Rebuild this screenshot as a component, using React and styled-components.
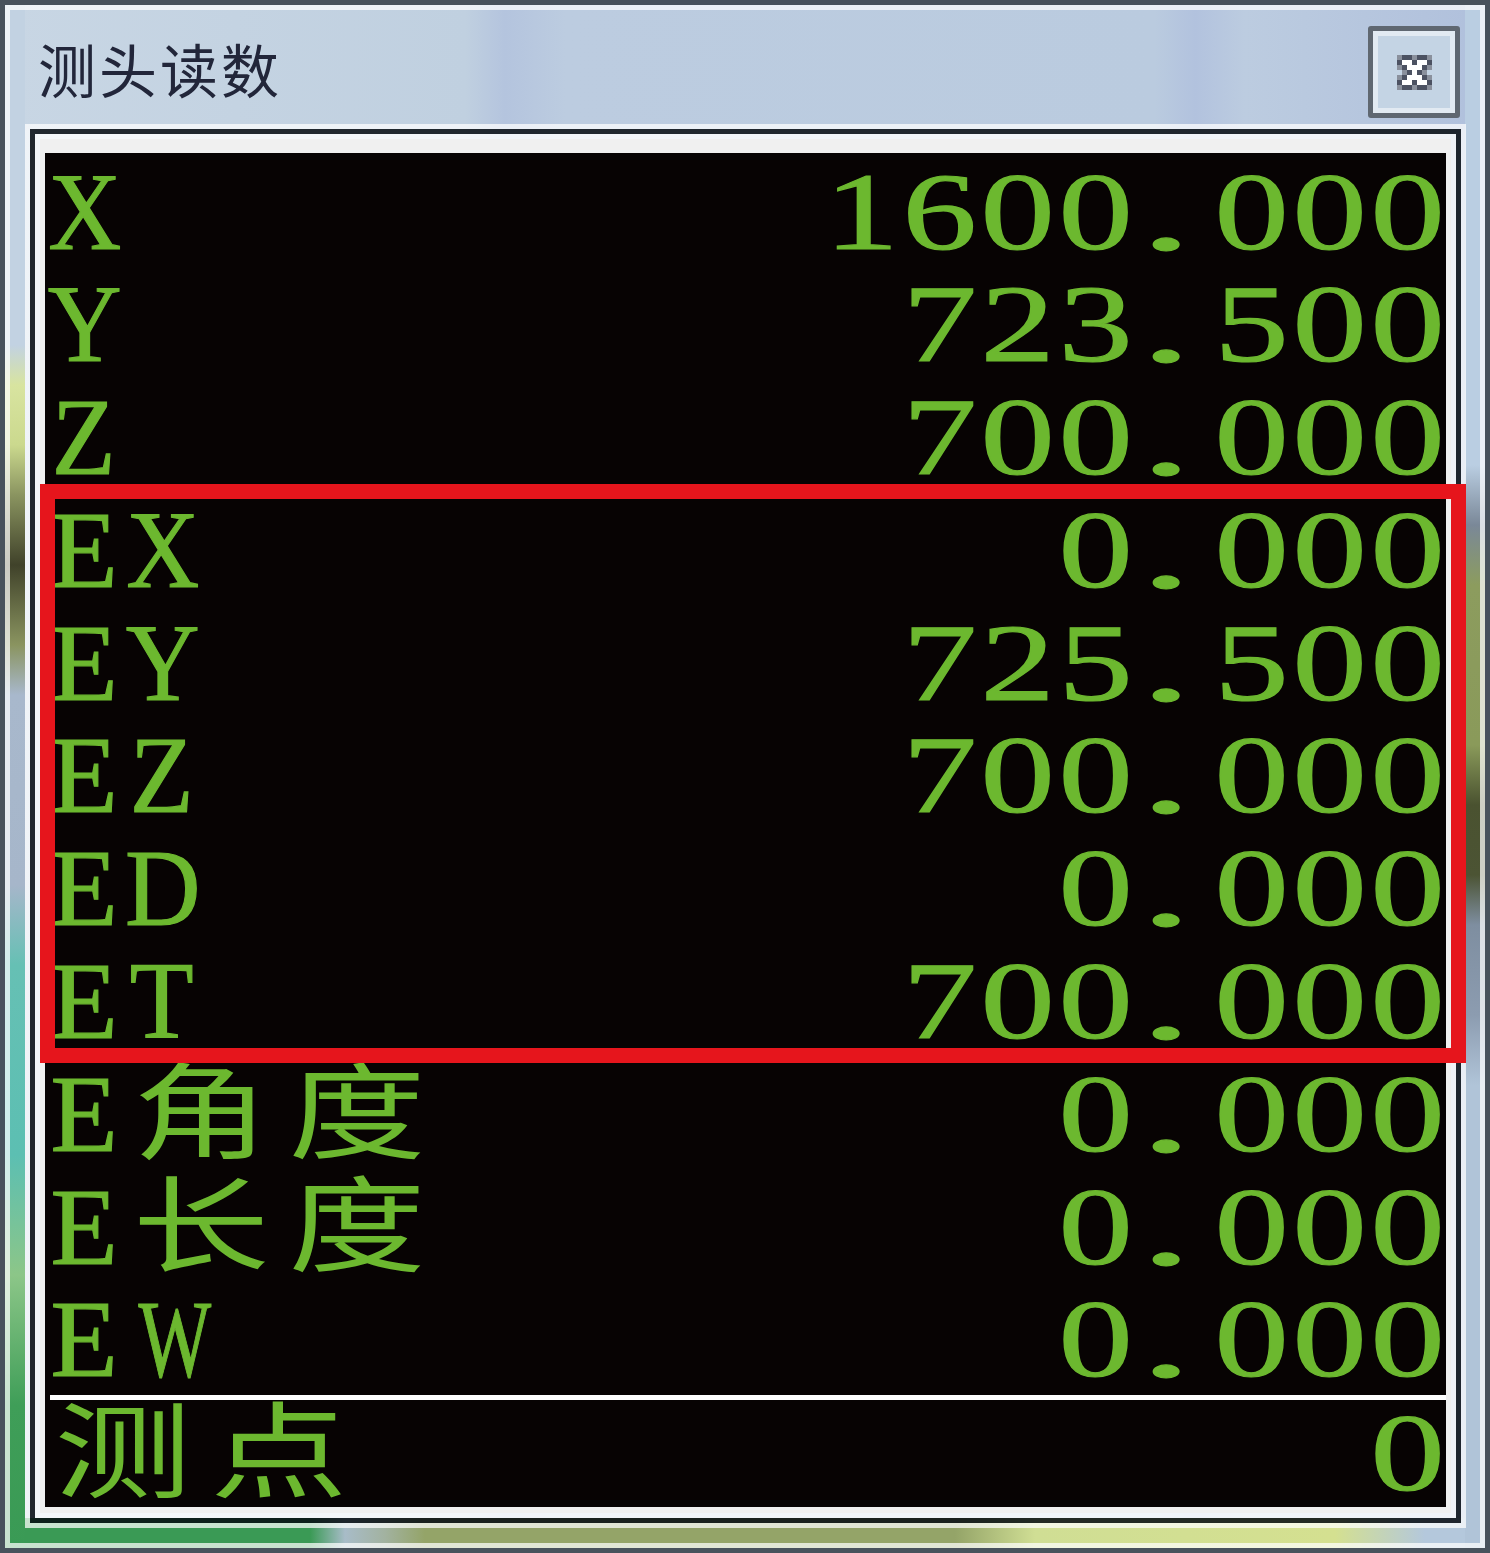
import React from "react";
import styled, { createGlobalStyle } from "styled-components";

const Global = createGlobalStyle`
  html, body { margin: 0; padding: 0; background: #ffffff; }
  body { font-family: "Liberation Serif", serif; }
`;

const Window = styled.div`
  width: 1490px;
  height: 1553px;
  box-sizing: border-box;
  border: 5px solid #48525c;
  display: flex;
`;

const Frame = styled.div`
  flex: 1;
  box-sizing: border-box;
  border: 5px solid rgba(255, 255, 255, 0.72);
  padding: 0 14px 15px 15px;
  display: flex;
  flex-direction: column;
  background-origin: border-box;
  background-repeat: no-repeat;
  background-image:
    linear-gradient(to bottom,
      #c2d2e2 0px, #c2d2e2 340px, #d8e4a0 380px, #cbd98e 440px,
      #8a9460 490px, #40422a 560px, #8a9460 640px, #a8b8cc 690px,
      #a6b6ca 880px, #66c0b4 960px, #5cbfb2 1150px, #8cc688 1270px,
      #3f9e58 1400px, #3a9a55 100%),
    linear-gradient(to bottom,
      #bacee2 0px, #bacee2 460px, #7a8898 520px, #8c9c5e 580px,
      #8a9a5a 740px, #4a5230 800px, #4c5434 870px, #7e8ea0 920px,
      #8c9cb0 1010px, #b0c4d8 1080px, #b0c4d8 100%),
    linear-gradient(to right,
      #3a9a55 0px, #3a9a55 305px, #a8bcc8 340px, #a2b2a0 380px,
      #94a468 420px, #94a468 950px, #d0de94 1030px, #d4e090 1330px,
      #b4c8dc 1420px, #b4c8dc 100%),
    linear-gradient(to right,
      #c8d6e4 0px, #c0d0e0 460px, #b4c4de 500px, #bccce0 560px,
      #bacbdf 1150px, #b2c2de 1190px, #bccce0 1240px, #b0c0dc 100%);
  background-size: 20px 100%, 20px 100%, 100% 30px, 100% 100%;
  background-position: left top, right top, left bottom, left top;
`;

const TitleBar = styled.div`
  height: 114px;
  flex: none;
  box-sizing: border-box;
  display: flex;
  align-items: center;
  justify-content: space-between;
  padding: 0 6px 0 13px;
`;

const Title = styled.div`
  font-family: "Noto Sans CJK SC", sans-serif;
  font-size: 58px;
  line-height: 58px;
  letter-spacing: 3px;
  color: #22263a;
  margin-top: 2px;
`;

const CloseButton = styled.div`
  align-self: flex-start;
  margin-top: 16px;
  width: 92px;
  height: 92px;
  box-sizing: border-box;
  border: 5px solid #5f6771;
  border-radius: 3px;
  background: #c4d4e4;
  box-shadow: inset 0 0 0 5px #e2eaf2;
  display: flex;
  align-items: center;
  justify-content: center;
`;

const Client = styled.div`
  flex: 1;
  display: flex;
  border: 5px solid rgba(255, 255, 255, 0.72);
`;

const ClientEdge = styled.div`
  flex: 1;
  display: flex;
  border: 5px solid rgba(6, 12, 18, 0.86);
`;

const ClientBevel = styled.div`
  flex: 1;
  display: flex;
  border: 5px solid rgba(255, 255, 255, 0.8);
`;

const Face = styled.div`
  flex: 1;
  display: flex;
  background: #f0f0f0;
  padding: 14px 5px 6px 5px;
`;

const Panel = styled.div`
  flex: 1;
  position: relative;
  background: #070303;
  display: flex;
  flex-direction: column;
`;

const Row = styled.div`
  display: flex;
  justify-content: space-between;
  box-sizing: border-box;
  height: ${(p) => (p.$last ? "107px" : "112.8px")};
  padding-top: ${(p) => (p.$last ? "0px" : "5.5px")};
  font-family: "Liberation Serif", serif;
  font-size: 110px;
  line-height: ${(p) => (p.$last ? "106px" : "107px")};
  color: #6cb82f;
  -webkit-text-stroke: 1.2px #6cb82f;
  white-space: nowrap;
  flex: none;
`;

const Label = styled.div``;
const Value = styled.div``;

const Separator = styled.div`
  height: 5px;
  margin: 1.2px 0 0 5px;
  background: #ffffff;
  flex: none;
`;

const Cell = styled.span`
  display: inline-block;
  box-sizing: border-box;
  width: ${(p) => (p.$wide ? 156 : 78)}px;
  text-align: ${(p) => (p.$dot ? "left" : "center")};
  padding-left: ${(p) => (p.$dot ? 6 : 0)}px;
  font-family: ${(p) =>
    p.$wide ? '"Noto Sans CJK SC", sans-serif' : '"Liberation Serif", serif'};
  font-size: ${(p) => (p.$wide ? 104 : 110)}px;
  line-height: ${(p) => (p.$wide ? "76px" : "inherit")};
  -webkit-text-stroke: ${(p) => (p.$wide ? "0px transparent" : "inherit")};
`;

const Ink = styled.span`
  display: inline-block;
  transform: scaleX(${(p) => p.$sx});
  transform-origin: ${(p) => (p.$dot ? "left" : "center")} bottom;
`;

const Highlight = styled.div`
  position: absolute;
  left: -5px;
  top: 331px;
  width: 1426px;
  height: 579px;
  box-sizing: border-box;
  border: 15px solid #e6151c;
  pointer-events: none;
`;

const SCALE = { W: 0.7, X: 0.92, Y: 0.93, D: 0.95, Z: 0.95, T: 0.95, ".": 1.9 };

function Chars({ text }) {
  return [...text].map((ch, i) => {
    const wide = /[\u4e00-\u9fff]/.test(ch);
    const digit = /\d/.test(ch);
    const dot = ch === ".";
    const sx = wide ? 1.32 : digit ? 1.35 : SCALE[ch] ?? 1;
    return (
      <Cell key={i} $wide={wide} $dot={dot}>
        <Ink $sx={sx} $dot={dot}>
          {ch}
        </Ink>
      </Cell>
    );
  });
}

function CloseIcon() {
  const colors = { d: "#4c5262", g: "#8a909c", w: "#ffffff" };
  const grid = [
    "gddgddg",
    "dwwdwwd",
    "gdwwwdg",
    ".gdwdg.",
    "gdwwwdg",
    "dwwdwwd",
    "gddgddg",
  ];
  return (
    <svg width="35" height="35" viewBox="0 0 7 7" shapeRendering="crispEdges">
      {grid.flatMap((row, y) =>
        [...row].map((c, x) =>
          c === "." ? null : (
            <rect key={`${x}-${y}`} x={x} y={y} width="1" height="1" fill={colors[c]} />
          )
        )
      )}
    </svg>
  );
}

const readings = [
  ["X", "1600.000"],
  ["Y", "723.500"],
  ["Z", "700.000"],
  ["EX", "0.000"],
  ["EY", "725.500"],
  ["EZ", "700.000"],
  ["ED", "0.000"],
  ["ET", "700.000"],
  ["E角度", "0.000"],
  ["E长度", "0.000"],
  ["EW", "0.000"],
];

export default function App() {
  return (
    <>
      <Global />
      <Window>
        <Frame>
          <TitleBar>
            <Title>测头读数</Title>
            <CloseButton>
              <CloseIcon />
            </CloseButton>
          </TitleBar>
          <Client>
            <ClientEdge>
              <ClientBevel>
                <Face>
                  <Panel>
                    {readings.map(([label, value]) => (
                      <Row key={label}>
                        <Label>
                          <Chars text={label} />
                        </Label>
                        <Value>
                          <Chars text={value} />
                        </Value>
                      </Row>
                    ))}
                    <Separator />
                    <Row $last>
                      <Label>
                        <Chars text="测点" />
                      </Label>
                      <Value>
                        <Chars text="0" />
                      </Value>
                    </Row>
                    <Highlight />
                  </Panel>
                </Face>
              </ClientBevel>
            </ClientEdge>
          </Client>
        </Frame>
      </Window>
    </>
  );
}
